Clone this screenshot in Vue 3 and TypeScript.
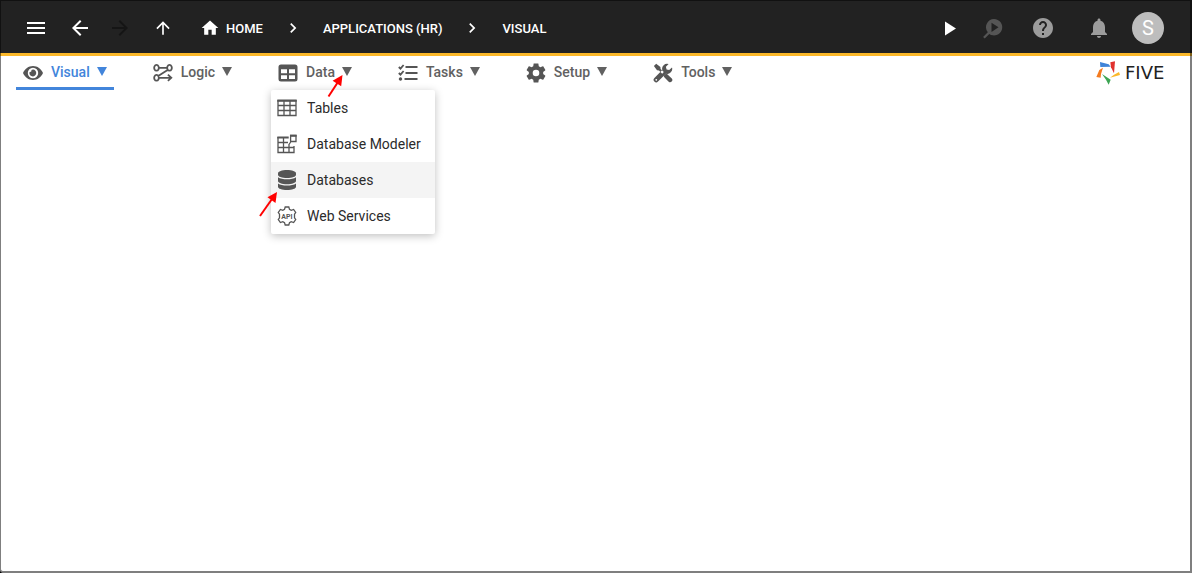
<script setup lang="ts">
import { ref } from 'vue'

interface Shape {
  d: string
  stroke?: boolean
}

interface Tab {
  id: string
  label: string
  shapes: Shape[]
}

const GEAR =
  'M19.14 12.94c.04-.3.06-.61.06-.94 0-.32-.02-.64-.07-.94l2.03-1.58c.18-.14.23-.41.12-.61l-1.92-3.32c-.12-.22-.37-.29-.59-.22l-2.39.96c-.5-.38-1.03-.7-1.62-.94l-.36-2.54c-.04-.24-.24-.41-.48-.41h-3.84c-.24 0-.43.17-.47.41l-.36 2.54c-.59.24-1.13.57-1.62.94l-2.39-.96c-.22-.08-.47 0-.59.22L2.74 8.87c-.12.21-.08.47.12.61l2.03 1.58c-.05.3-.09.63-.09.94s.02.64.07.94l-2.03 1.58c-.18.14-.23.41-.12.61l1.92 3.32c.12.22.37.29.59.22l2.39-.96c.5.38 1.03.7 1.62.94l.36 2.54c.05.24.24.41.48.41h3.84c.24 0 .44-.17.47-.41l.36-2.54c.59-.24 1.13-.56 1.62-.94l2.39.96c.22.08.47 0 .59-.22l1.92-3.32c.12-.22.07-.47-.12-.61l-2.01-1.58z'

const tabs: Tab[] = [
  {
    id: 'visual',
    label: 'Visual',
    shapes: [
      {
        d: 'M10 3C5.5 3 1.8 5.8 0 10c1.8 4.2 5.5 7 10 7s8.200-2.800 10-7c-1.800-4.200-5.500-7-10-7zm0 12.200a5.200 5.200 0 1 1 0-10.400 5.200 5.200 0 0 1 0 10.400zm0-8.600a3.400 3.400 0 0 0-1.500.4 1.700 1.700 0 0 1-1.900 1.900A3.400 3.400 0 1 0 10 6.600z',
      },
    ],
  },
  {
    id: 'logic',
    label: 'Logic',
    shapes: [
      {
        d: 'M3.500 1.900a2.300 2.900 0 1 0 .01 0zM16.500 1.900a2.300 2.900 0 1 0 .01 0zM3.500 11.900a2.300 2.900 0 1 0 .01 0zM5.800 4.800h8.400M15 6.800L5.200 13M5.800 14.800H18M14.900 11.700l3.400 3.100-3.400 3.100',
        stroke: true,
      },
    ],
  },
  {
    id: 'data',
    label: 'Data',
    shapes: [
      {
        d: 'M3 1.500h14A2.500 2.500 0 0 1 19.500 4v12a2.500 2.500 0 0 1-2.500 2.500H3A2.500 2.500 0 0 1 .5 16V4A2.500 2.500 0 0 1 3 1.500zM3 6.300v3.900h6V6.300zm8 0v3.900h6V6.300zM3 12.200V16h6v-3.800zm8 0V16h6v-3.800z',
      },
    ],
  },
  {
    id: 'tasks',
    label: 'Tasks',
    shapes: [
      { d: 'M7.500 3h12v2h-12zM7.500 9h12v2h-12zM6.500 15h13v2h-13zM2.500 14.300a1.700 1.700 0 1 0 .01 0z' },
      { d: 'M.8 4l1.700 1.600L5.600 2M.8 10l1.700 1.600L5.600 8', stroke: true },
    ],
  },
  { id: 'setup', label: 'Setup', shapes: [] },
  {
    id: 'tools',
    label: 'Tools',
    shapes: [
      {
        d: 'M3.200.8l4.200 3.100.2 2 3.200 3.200-1.600 1.600L6 7.500l-2-.2L.9 3.100zM12.300 11.200l1.500-.5 5 4.900a2.200 2.200 0 0 1-3.100 3.100l-4.900-5 .4-1.500zM19 4.400l-2.800 2.700-2.600-.7-.7-2.600L15.600 1a5 5 0 0 0-6.300 6.100L1.400 15a2.500 2.500 0 0 0 3.600 3.600l7.900-7.900A5 5 0 0 0 19 4.400zM3.300 15.900a.9.9 0 1 1-.01 1.800.9.900 0 0 1 .01-1.800z',
      },
    ],
  },
]

const menuItems = [
  { id: 'tables', label: 'Tables' },
  { id: 'modeler', label: 'Database Modeler' },
  { id: 'databases', label: 'Databases' },
  { id: 'services', label: 'Web Services' },
]

const crumbs = ['HOME', 'APPLICATIONS (HR)', 'VISUAL']

const activeTab = ref('visual')
const openMenu = ref('data')
const highlighted = ref('databases')

function toggle(id: string) {
  openMenu.value = openMenu.value === id ? '' : id
}
</script>

<template>
  <div class="page">
    <header class="topbar">
      <button class="icon-btn" type="button" aria-label="Menu">
        <svg viewBox="0 0 24 24" class="i24"><path d="M3 18h18v-2H3v2zm0-5h18v-2H3v2zm0-7v2h18V6H3z" /></svg>
      </button>
      <button class="icon-btn back" type="button" aria-label="Back">
        <svg viewBox="0 0 24 24" class="i24"><path d="M20 11H7.830l5.590-5.590L12 4l-8 8 8 8 1.410-1.410L7.830 13H20v-2z" /></svg>
      </button>
      <button class="icon-btn forward" type="button" aria-label="Forward" disabled>
        <svg viewBox="0 0 24 24" class="i24"><path d="M12 4l-1.410 1.410L16.170 11H4v2h12.170l-5.580 5.590L12 20l8-8z" /></svg>
      </button>
      <button class="icon-btn up" type="button" aria-label="Up">
        <svg viewBox="0 0 24 24" class="i20"><path d="M4 12l1.410 1.410L11 7.830V20h2V7.830l5.580 5.590L20 12l-8-8-8 8z" /></svg>
      </button>
      <nav class="crumbs" aria-label="Breadcrumb">
        <template v-for="(crumb, i) in crumbs" :key="crumb">
          <svg v-if="i > 0" viewBox="0 0 24 24" class="i20"><path d="M10 6L8.590 7.410 13.170 12l-4.580 4.590L10 18l6-6z" /></svg>
          <a href="#" class="crumb">
            <svg v-if="i === 0" viewBox="0 0 24 24" class="i20"><path d="M10 20v-6h4v6h5v-8h3L12 3 2 12h3v8z" /></svg>
            {{ crumb }}
          </a>
        </template>
      </nav>
      <div class="actions">
        <button class="icon-btn" type="button" aria-label="Run">
          <svg viewBox="0 0 24 24" class="i24"><path d="M8 5.500v14l11-7z" /></svg>
        </button>
        <button class="icon-btn inspect" type="button" aria-label="Inspect" disabled>
          <svg viewBox="0 0 24 24" class="i24">
            <path fill-rule="evenodd" d="M13 3a8.200 8.200 0 1 1-4.700 14.900L3.700 22.500l-1.600-1.500 4.700-4.700A8.200 8.200 0 0 1 13 3zm-2.500 3.700v9.200l7-4.600z" />
          </svg>
        </button>
        <button class="icon-btn help" type="button" aria-label="Help">
          <svg viewBox="0 0 24 24" class="i24"><path d="M12 2C6.480 2 2 6.480 2 12s4.480 10 10 10 10-4.480 10-10S17.520 2 12 2zm1 17h-2v-2h2v2zm2.070-7.750l-.9.920C13.450 12.900 13 13.500 13 15h-2v-.5c0-1.100.45-2.100 1.170-2.830l1.240-1.260c.37-.36.59-.86.59-1.410 0-1.100-.9-2-2-2s-2 .9-2 2H8c0-2.210 1.790-4 4-4s4 1.790 4 4c0 .88-.36 1.680-.93 2.250z" /></svg>
        </button>
        <button class="icon-btn bell" type="button" aria-label="Notifications">
          <svg viewBox="0 0 24 24" class="i24"><path d="M12 22c1.100 0 2-.9 2-2h-4c0 1.100.9 2 2 2zm6-6v-5c0-3.070-1.630-5.640-4.500-6.320V4c0-.83-.67-1.500-1.500-1.500s-1.500.67-1.500 1.500v.68C7.640 5.360 6 7.920 6 11v5l-2 2v1h16v-1l-2-2z" /></svg>
        </button>
        <button class="avatar" type="button" aria-label="Account">S</button>
      </div>
    </header>

    <div class="toolbar">
      <nav class="tabs" aria-label="Sections">
        <div v-for="tab in tabs" :key="tab.id" class="tab-wrap">
          <button
            type="button"
            class="tab"
            :class="{ active: tab.id === activeTab }"
            :aria-expanded="openMenu === tab.id"
            @click="toggle(tab.id)"
          >
            <svg v-if="tab.id === 'setup'" viewBox="2 2 20 20" class="tab-icon">
              <path fill-rule="evenodd" :d="GEAR + 'M12 15.300a3.300 3.300 0 1 1 0-6.600 3.300 3.300 0 0 1 0 6.600z'" />
            </svg>
            <svg v-else viewBox="0 0 20 20" class="tab-icon">
              <path
                v-for="shape in tab.shapes"
                :key="shape.d"
                :d="shape.d"
                fill-rule="evenodd"
                :class="{ line: shape.stroke }"
              />
            </svg>
            <span>{{ tab.label }}</span>
            <svg viewBox="0 0 10 10" class="caret"><path d="M0 0h10L5 9z" /></svg>
          </button>

          <ul v-if="tab.id === 'data' && openMenu === 'data'" class="menu">
            <li v-for="item in menuItems" :key="item.id">
              <button
                type="button"
                class="menu-item"
                :class="{ hot: item.id === highlighted }"
                @mouseenter="highlighted = item.id"
              >
                <svg viewBox="0 0 20 20" class="menu-icon">
                  <g v-if="item.id === 'tables'">
                    <path class="thin" d="M1 2v15.500h18V2M1 7.500h18M1 12.500h18M7 3v14M13 3v14" />
                    <path d="M.3 1.500h19.400v2.300H.3z" />
                  </g>
                  <g v-else-if="item.id === 'modeler'">
                    <path class="thin" d="M1 3v15.500h16V12M1 8.500h10M1 13.500h16M6.500 4v14M12 10v8M13.600 1.500h5.400v6h-5.400zM14 7.500l-2 3" />
                    <path d="M.3 2.500h11.400v2H.3zM13 .8h6.600v2H13z" />
                  </g>
                  <g v-else-if="item.id === 'databases'">
                    <path d="M10 0c5 0 9 1.400 9 3.300v1.500c0 1.900-4 3.300-9 3.300S1 6.700 1 4.800V3.300C1 1.400 5 0 10 0z" />
                    <path d="M1 7.300c1.900 1.500 5.400 2 9 2s7.100-.5 9-2v3.800c0 1.800-4 3.200-9 3.200s-9-1.400-9-3.200z" />
                    <path d="M1 13.500c1.900 1.500 5.400 2 9 2s7.100-.5 9-2v3.200c0 1.900-4 3.300-9 3.300s-9-1.400-9-3.300z" />
                  </g>
                  <g v-else>
                    <path
                      class="thin"
                      d="M8.200 1h3.600l.7 2.400 1.700.9 2.400-.8 2.100 3-1.200 1.700v3.600l1.200 1.700-2.100 3-2.400-.8-1.700.9-.7 2.400H8.200l-.7-2.400-1.700-.9-2.400.8-2.100-3 1.200-1.700V8.200L1.300 6.500l2.100-3 2.400.8 1.700-.9z"
                    />
                    <text x="10" y="12.500" text-anchor="middle" class="api">API</text>
                  </g>
                </svg>
                {{ item.label }}
              </button>
            </li>
          </ul>

          <svg v-if="tab.id === 'data'" viewBox="0 0 20 26" class="pointer at-tab">
            <path d="M4.500 24.500L14 10" />
            <path class="head" d="M18.500 3l-1.300 11.300-8.600-5.600z" />
          </svg>
          <svg v-if="tab.id === 'data' && openMenu === 'data'" viewBox="0 0 20 26" class="pointer at-item">
            <path d="M1 25L13 8" />
            <path class="head" d="M18 1l-1.500 11-8-5.700z" />
          </svg>
        </div>
      </nav>

      <a href="#" class="brand" aria-label="Five">
        <svg viewBox="0 0 72 72" class="mark">
          <path fill="#3f83d8" d="M12 3l26 7 6 7-31 1z" />
          <path fill="#e0312e" d="M43 4l14-3-3 36-9-18z" />
          <path fill="#fbb829" d="M69 33l3 9-30 8 12-9z" />
          <path fill="#3da553" d="M18 39l26 17-6 15-8-15z" />
          <path fill="#f47b20" d="M21 20l-6 19-1 11-13-2 9-21z" />
        </svg>
        <span class="word">FIVE</span>
      </a>
    </div>
    <main class="canvas"></main>
  </div>
</template>

<style>
html,
body {
  margin: 0;
  background: #000;
}
</style>

<style scoped>
.page {
  position: relative;
  box-sizing: border-box;
  display: flex;
  flex-direction: column;
  min-height: 100vh;
  background: #fff;
  border-bottom-left-radius: 4px;
  font-family: Roboto, "Liberation Sans", sans-serif;
}
.page::after {
  content: "";
  position: absolute;
  inset: 0;
  border: solid rgba(0, 0, 0, 0.5);
  border-width: 1px 2px 2px 1px;
  border-bottom-left-radius: 4px;
  pointer-events: none;
}
button {
  border: 0;
  margin: 0;
  padding: 0;
  background: none;
  font: inherit;
  color: inherit;
  cursor: pointer;
}
a {
  color: inherit;
  text-decoration: none;
}
svg {
  display: block;
  flex: none;
  fill: currentColor;
}
.i24 {
  width: 24px;
  height: 24px;
}
.i20 {
  width: 20px;
  height: 20px;
}
.topbar {
  display: flex;
  align-items: center;
  height: 50px;
  padding: 3px 28px 0 24px;
  background: #222;
  border-bottom: 3px solid #fbb829;
  color: #fff;
}
.back {
  margin-left: 20px;
}
.forward {
  margin-left: 16px;
  color: #151515;
}
.up {
  margin-left: 21px;
}
.crumbs {
  display: flex;
  align-items: center;
  gap: 20px;
  margin-left: 27px;
  font-size: 13px;
  font-weight: 500;
}
.crumb {
  display: flex;
  align-items: center;
  gap: 6px;
  white-space: nowrap;
}
.actions {
  display: flex;
  align-items: center;
  margin-left: auto;
}
.inspect {
  margin-left: 20px;
  color: #555;
}
.help {
  margin-left: 26px;
  color: #9c9c9c;
}
.bell {
  margin-left: 32px;
  color: #9c9c9c;
}
.avatar {
  width: 32px;
  height: 32px;
  margin-left: 21px;
  border-radius: 50%;
  background: #bdbdbd;
  color: #fff;
  font-size: 20px;
}
.toolbar {
  display: flex;
  justify-content: space-between;
  padding: 0 8px 0 16px;
}
.tabs {
  display: flex;
  gap: 32px;
}
.tab-wrap {
  position: relative;
}
.tab {
  display: flex;
  align-items: center;
  height: 34px;
  padding: 0 7px;
  border-bottom: 3px solid transparent;
  box-sizing: border-box;
  color: #616161;
  font-size: 14px;
  font-weight: 500;
}
.tab.active {
  border-bottom-color: #4285db;
  border-radius: 2px 2px 0 0;
  color: #4285db;
}
.tab-icon {
  width: 20px;
  height: 20px;
  margin: 2px 8px 0 0;
  color: #555;
}
.line {
  fill: none;
  stroke: currentColor;
  stroke-width: 1.8;
}
.caret {
  width: 10px;
  height: 10px;
  margin-left: 7px;
}
.menu {
  position: absolute;
  z-index: 1;
  top: 34px;
  left: 0;
  margin: 0;
  padding: 0;
  list-style: none;
  background: #fff;
  border-radius: 2px;
  box-shadow: 0 2px 8px rgba(0, 0, 0, 0.25);
}
.menu-item {
  display: flex;
  align-items: center;
  gap: 10px;
  width: 100%;
  height: 36px;
  padding: 0 14px 0 6px;
  color: #2b2b2b;
  font-size: 14px;
  white-space: nowrap;
}
.menu-item.hot {
  background: #f4f4f4;
}
.menu-icon {
  width: 20px;
  height: 20px;
  color: #555;
}
.thin {
  fill: none;
  stroke: currentColor;
  stroke-width: 1.3;
}
.api {
  font-size: 7px;
  font-weight: 700;
}
.pointer {
  position: absolute;
  z-index: 2;
  width: 20px;
  height: 26px;
  fill: none;
  stroke: #f00;
  stroke-width: 2;
  pointer-events: none;
}
.head {
  fill: #f00;
  stroke: none;
}
.at-tab {
  top: 16px;
  left: 53px;
}
.at-item {
  top: 135px;
  left: -12px;
}
.brand {
  display: flex;
  align-items: center;
  gap: 5px;
  min-width: 88px;
  height: 34px;
}
.mark {
  width: 24px;
  height: 24px;
}
.word {
  color: #222;
  font-family: "DejaVu Sans", sans-serif;
  font-size: 18px;
  line-height: 20px;
}
.canvas {
  flex: 1;
}
</style>
